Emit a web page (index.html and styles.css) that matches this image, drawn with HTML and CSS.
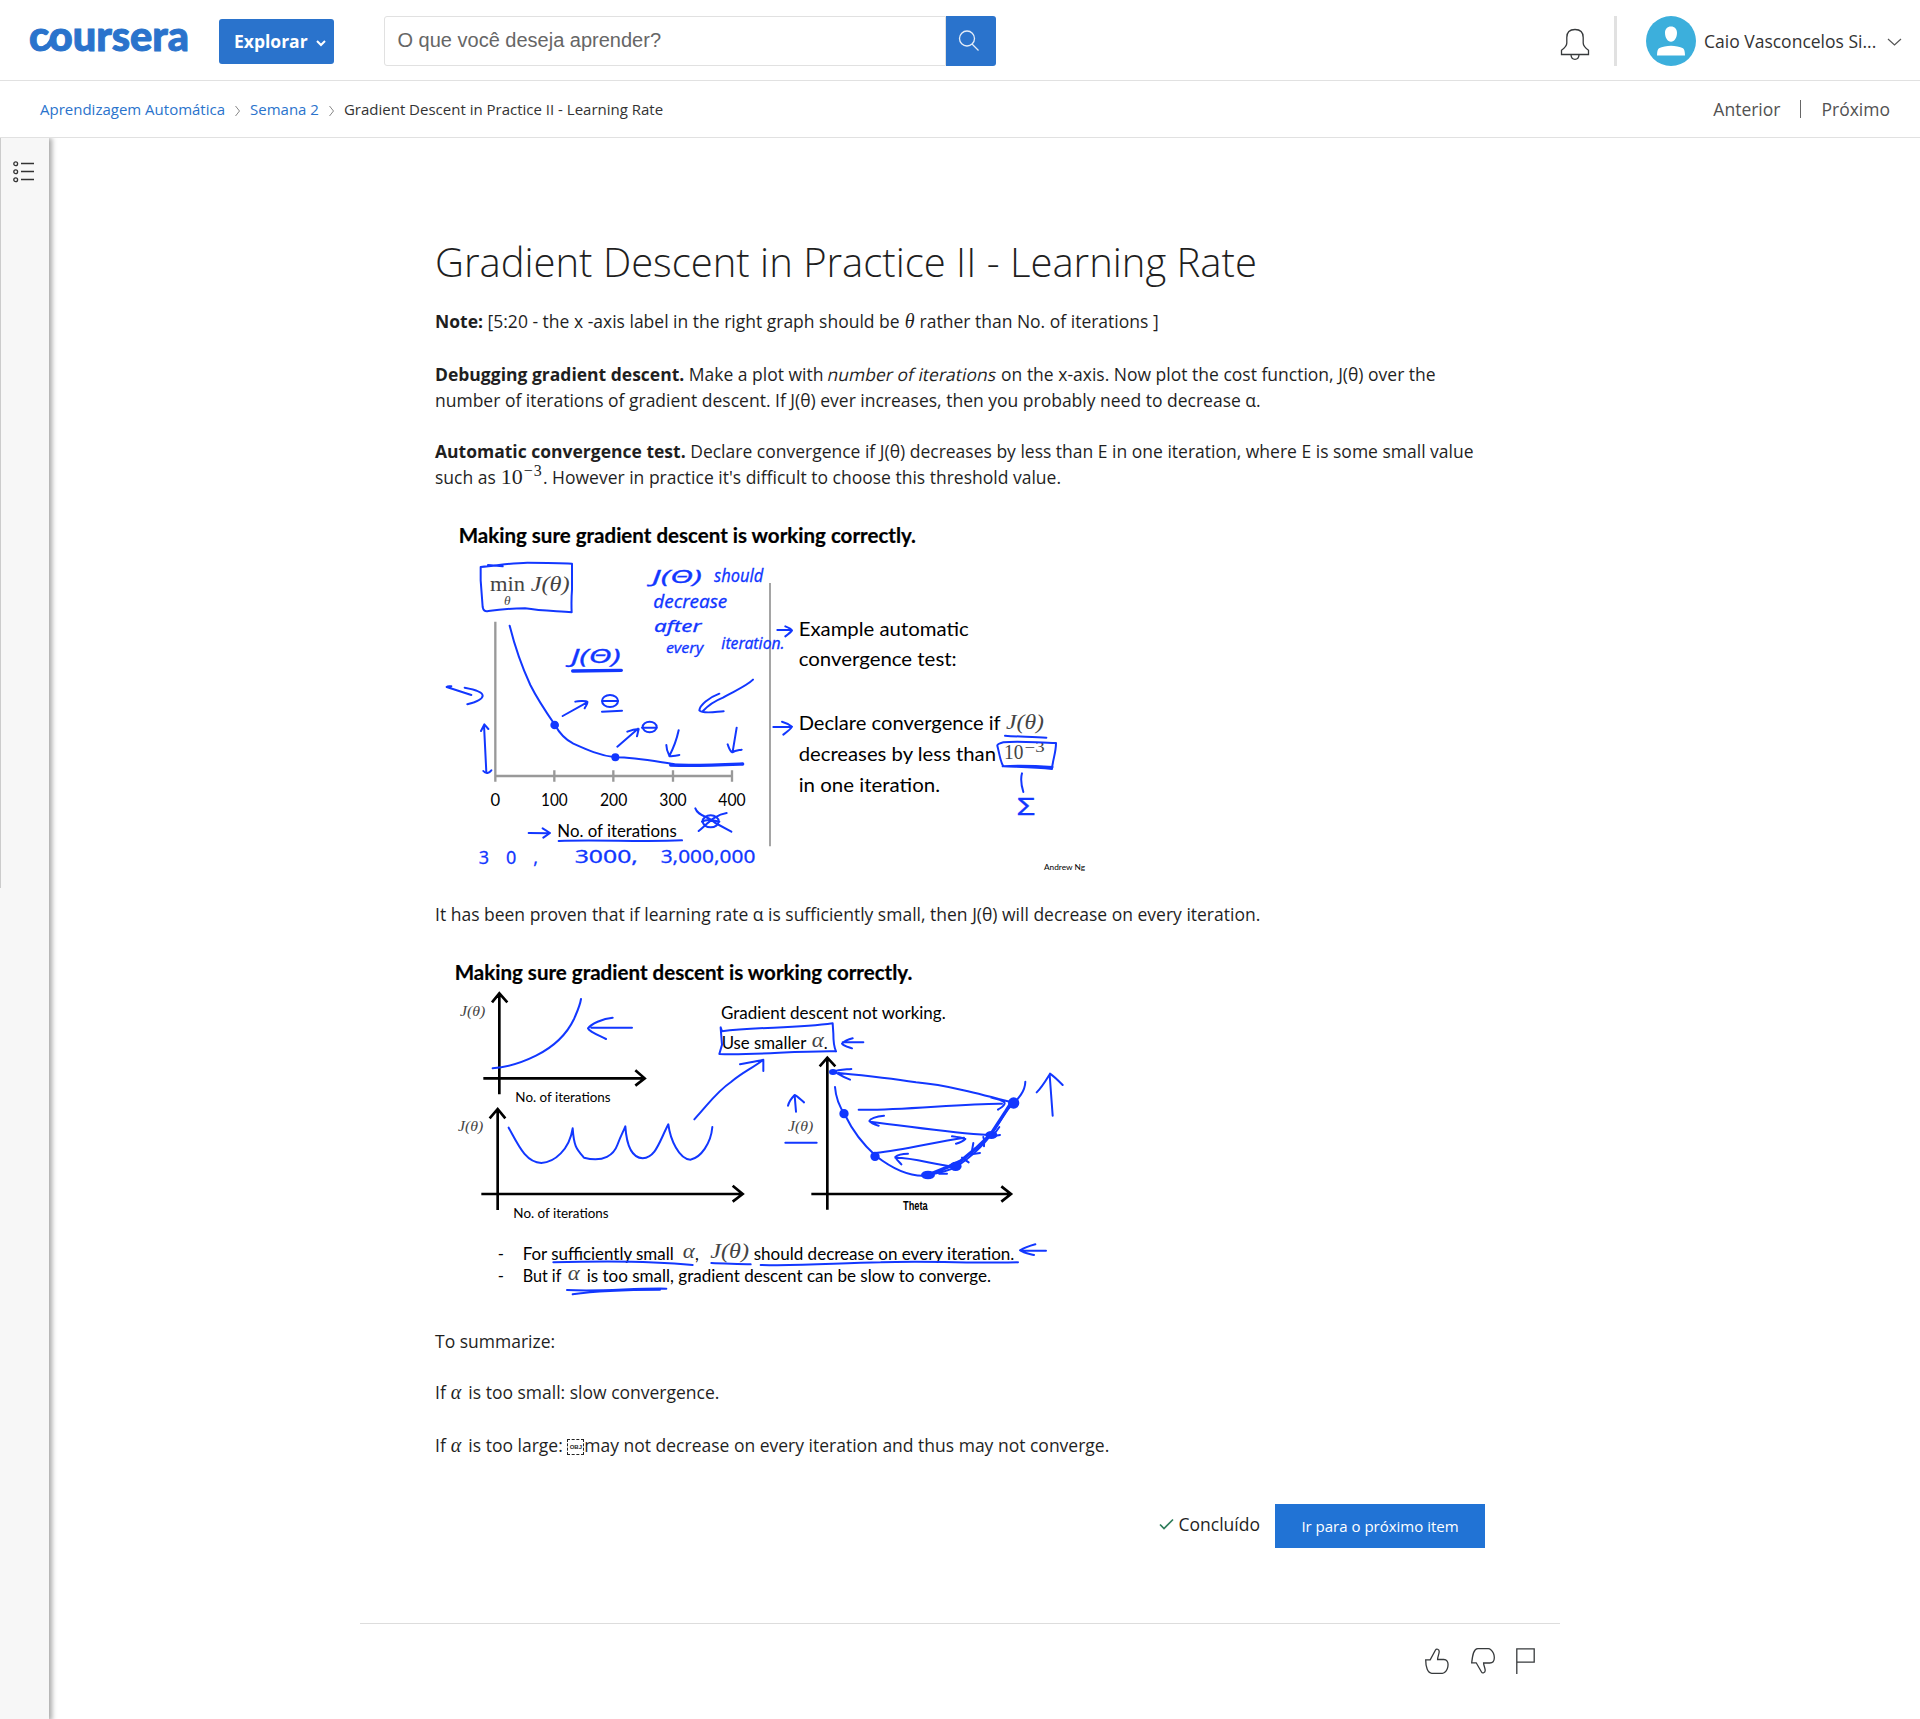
FILE: index.html
```html
<!DOCTYPE html>
<html lang="pt-BR">
<head>
<meta charset="utf-8">
<title>Gradient Descent in Practice II - Learning Rate | Coursera</title>
<link rel="stylesheet" href="styles.css">
</head>
<body>
<header class="topbar">
  <svg class="logo" width="162" height="34" viewBox="0 0 162 34" role="img" aria-label="coursera">
    <text y="27" x="0" textLength="160" lengthAdjust="spacingAndGlyphs">coursera</text>
    <path d="M15.500 24.200c4-1.500 5.500-5 7.500-8.200 1.500-2.500 2.500-5 5.500-7"/>
  </svg>
  <button class="explore">Explorar<svg width="10" height="7" viewBox="0 0 10 7"><path d="M1 1l4 4 4-4"/></svg></button>
  <div class="search">
    <div class="search-input">O que você deseja aprender?</div>
    <button class="search-btn" aria-label="Buscar"><svg width="22" height="22" viewBox="0 0 22 22"><circle cx="9" cy="8.500" r="7.500"/><path d="M14 14l6.500 6.500"/></svg></button>
  </div>
  <div class="account">
    <svg class="bell" width="30" height="32" viewBox="0 0 30 32"><path d="M1.500 26.500v-4.200c2.700-2 5.300-4.300 5.300-7.300v-5.500c0-5 3-8 8.200-8s8.200 3 8.200 8v5.500c0 3 2.600 5.300 5.300 7.300v4.200zM11 27c.2 2.700 1.700 4.300 4 4.300s3.800-1.600 4-4.300"/></svg>
    <span class="divider"></span>
    <svg class="avatar" width="50" height="50" viewBox="0 0 50 50"><circle cx="25" cy="25" r="25" fill="#3cafdc"/><path fill="#fff" d="M25 10.500c-3.700 0-6 2.500-6 6.300 0 4.700 2.600 9 6 9s6-4.300 6-9c0-3.800-2.300-6.300-6-6.300zM11 39.500c.1-4 .6-6.500 2-7.300 3-1.600 8-2.500 12-2.500s9 .9 12 2.500c1.400.8 1.900 3.300 2 7.300z"/></svg>
    <span class="name">Caio Vasconcelos Si...</span>
    <svg class="chev" width="15" height="8" viewBox="0 0 15 8"><path d="M1 1l6.500 6L14 1"/></svg>
  </div>
</header>
<nav class="crumbs">
  <a>Aprendizagem Automática</a>
  <svg width="7" height="12" viewBox="0 0 7 12"><path d="M1.500 1l4 5-4 5"/></svg>
  <a>Semana 2</a>
  <svg width="7" height="12" viewBox="0 0 7 12"><path d="M1.500 1l4 5-4 5"/></svg>
  <span>Gradient Descent in Practice II - Learning Rate</span>
  <div class="pager"><span>Anterior</span><i></i><span>Próximo</span></div>
</nav>
<div class="page">
  <aside class="rail">
    <svg width="22" height="22" viewBox="0 0 22 22"><g><circle cx="2.700" cy="2.800" r="1.900"/><circle cx="2.700" cy="10.800" r="1.900"/><circle cx="2.700" cy="18.800" r="1.900"/></g><path d="M8 2.500h13M8 10.500h13M8 18.500h13"/></svg>
  </aside>
  <main class="main">
    <article class="reading">
      <h1>Gradient Descent in Practice II - Learning Rate</h1>
      <p class="p-note"><b>Note:</b> [5:20 - the x -axis label in the right graph should be <em class="math">θ</em> rather than No. of iterations ]</p>
      <p class="p-debug"><b>Debugging gradient descent.</b> Make a plot with <em class="slant">number of iterations</em> on the x-axis. Now plot the cost function, J(θ) over the<br>number of iterations of gradient descent. If J(θ) ever increases, then you probably need to decrease α.</p>
      <p class="p-auto"><b>Automatic convergence test.</b> Declare convergence if J(θ) decreases by less than E in one iteration, where E is some small value<br>such as <span class="math num">10<sup>−3</sup></span>. However in practice it's difficult to choose this threshold value.</p>

      <svg class="slide slide-one" width="655" height="370" viewBox="15 0 1965 1110">
        <text class="h" x="86" y="97" textLength="1372" lengthAdjust="spacingAndGlyphs">Making sure gradient descent is working correctly.</text>
        <g class="gray"><path d="M196 332v480M196 795h712M373 778v34M550 778v34M729 778v34M906 778v34"/></g>
        <path class="sep" d="M1020 216v790"/>
        <g class="t axis"><text x="196" y="884">0</text><text x="373" y="884" textLength="80" lengthAdjust="spacingAndGlyphs">100</text><text x="551" y="884" textLength="82" lengthAdjust="spacingAndGlyphs">200</text><text x="729" y="884" textLength="82" lengthAdjust="spacingAndGlyphs">300</text><text x="906" y="884" textLength="82" lengthAdjust="spacingAndGlyphs">400</text></g>
        <g class="t">
          <text x="382" y="977" textLength="358" lengthAdjust="spacingAndGlyphs" font-size="49">No. of iterations</text>
          <text x="1106" y="374" textLength="510" lengthAdjust="spacingAndGlyphs">Example automatic</text>
          <text x="1106" y="465" textLength="474" lengthAdjust="spacingAndGlyphs">convergence test:</text>
          <text x="1106" y="658" textLength="606" lengthAdjust="spacingAndGlyphs">Declare convergence if</text>
          <text x="1106" y="749" textLength="592" lengthAdjust="spacingAndGlyphs">decreases by less than</text>
          <text x="1106" y="844" textLength="424" lengthAdjust="spacingAndGlyphs">in one iteration.</text>
          <text x="1842" y="1076" textLength="123" lengthAdjust="spacingAndGlyphs" font-size="25">Andrew Ng</text>
        </g>
        <g class="m"><text x="180" y="241" textLength="105" lengthAdjust="spacingAndGlyphs" class="up">min</text><text x="222" y="281" font-size="40">θ</text><text x="302" y="241" textLength="117" lengthAdjust="spacingAndGlyphs">J(θ)</text><text x="1727" y="653" textLength="154" lengthAdjust="spacingAndGlyphs" transform="translate(450 0) scale(.74 1)">J(θ)</text><text class="up" x="1722" y="745" textLength="58" lengthAdjust="spacingAndGlyphs" font-size="60">10</text><text class="up" x="1784" y="724" textLength="60" lengthAdjust="spacingAndGlyphs" font-size="42">−3</text></g>
        <g class="hand">
          <text x="666" y="215" textLength="150" lengthAdjust="spacingAndGlyphs">J(Θ)</text><text x="852" y="213" textLength="148" lengthAdjust="spacingAndGlyphs">should</text>
          <text x="670" y="292" textLength="222" lengthAdjust="spacingAndGlyphs">decrease</text><text x="672" y="362" textLength="142" lengthAdjust="spacingAndGlyphs" font-size="46">after</text>
          <text x="708" y="426" textLength="112" lengthAdjust="spacingAndGlyphs" font-size="44">every</text><text x="874" y="414" textLength="190" lengthAdjust="spacingAndGlyphs" font-size="46">iteration.</text>
          <text x="422" y="455" textLength="150" lengthAdjust="spacingAndGlyphs" font-size="60">J(Θ)</text>
          <text x="146" y="1058" textLength="178" lengthAdjust="spacing" class="up">3 0 ,</text><text x="434" y="1056" textLength="190" lengthAdjust="spacingAndGlyphs" class="up">3000,</text><text x="692" y="1055" textLength="284" lengthAdjust="spacingAndGlyphs" class="up">3,000,000</text>
          <text class="up" x="1760" y="911" font-size="68" textLength="56" lengthAdjust="spacingAndGlyphs">Σ</text>
        </g>
        <g class="ink">
          <path d="M174 162l44 4M152 168c50-4 90-12 140-13 50 0 90 0 134 3l0 78c-2 24-2 42-1 68-48-4-90-4-140-12-46 0-70 2-110 8-10 2-15-1-17-12l-6-80zM239 344c14 56 40 130 62 178 22 44 45 78 74 120 14 26 28 42 55 56 40 18 80 36 126 41 60 0 120 12 175 20"/>
          <path class="fat" d="M428 480l146-2M722 762c70 3 140 0 216-3"/>
          <path d="M398 615l72-40M436 572c12-4 34-2 36 0 2 8-6 14-8 20M516 602l60-3M562 707l62-54M592 662c14-6 30-8 34-8l-5 22M50 528l74 24M50 528c4-4 10-2 14-2M104 530c22 4 54 12 54 24 0 10-24 20-46 26M162 642l7 142M153 660l10-20 12 14M160 780c8 10 18 6 24-2M969 506c-20 20-64 38-90 54-25 10-45 24-60 40M868 548c-32 12-58 34-60 50 10 12 50 4 73 3M746 658c-6 28-18 58-28 77M709 702c0 16 6 26 10 34 8 0 18-2 29-4M920 650l-12 72M893 700c4 10 6 20 14 24 8-6 18-6 28-8M1042 357l40-1M1066 346c10 4 18 8 20 12-4 6-12 12-20 18M1030 648h54M1056 632c14 4 24 10 30 15-4 8-18 18-26 24M296 966l62 1M338 952l22 14-20 14M386 990c120-5 250 4 370-2M796 892c8 24 40 24 60 44l48 26M890 906c-34 4-58 32-84 54"/>
          <ellipse cx="540" cy="570" rx="24" ry="18"/><path d="M518 570h46M636 650h44M816 932c12-8 38-4 52 0"/><ellipse cx="659" cy="648" rx="21" ry="16"/><ellipse cx="842" cy="931" rx="24" ry="18"/>
          <path d="M1725 674c40 4 84 2 124 6M1702 704c0-4 10-8 18-10 50-6 104 2 158 2 0 30-10 50-12 78-50-6-96-6-146-8-10-16-12-40-18-62M1718 766c48-4 96-2 150 2M1776 787c-6 20-2 36 4 56"/>
          <circle class="dot" cx="374" cy="642" r="10"/><circle class="dot" cx="556" cy="739" r="9"/>
        </g>
      </svg>

      <p class="p-proven">It has been proven that if learning rate α is sufficiently small, then J(θ) will decrease on every iteration.</p>

      <svg class="slide slide-two" width="655" height="360" viewBox="15 180 1965 1080">
        <text class="h" x="74" y="268" textLength="1373" lengthAdjust="spacingAndGlyphs">Making sure gradient descent is working correctly.</text>
        <g class="black"><path d="M208 308v302M160 562h482M186 334l22-27 24 27M616 538l28 24-28 22M203 655v302M154 909h780M179 682l24-28 23 28M908 884l30 25-30 23M1192 504v452M1144 909h600M1169 526l23-26 24 26M1714 886l29 23-29 23"/></g>
        <g class="t">
          <text x="256" y="633" textLength="286" lengthAdjust="spacingAndGlyphs" font-size="40">No. of iterations</text><text x="250" y="981" textLength="286" lengthAdjust="spacingAndGlyphs" font-size="40">No. of iterations</text>
          <text x="873" y="385" textLength="674" lengthAdjust="spacingAndGlyphs" font-size="50">Gradient descent not working.</text><text x="875" y="474" textLength="254" lengthAdjust="spacingAndGlyphs" font-size="50">Use smaller</text><text x="1181" y="474" font-size="50">.</text>
          <text x="203" y="1108" font-size="50">-</text><text x="278" y="1108" textLength="453" lengthAdjust="spacingAndGlyphs" font-size="50">For sufficiently small</text><text x="795" y="1108" font-size="50">,</text><text x="971" y="1108" textLength="782" lengthAdjust="spacingAndGlyphs" font-size="50">should decrease on every iteration.</text>
          <text x="203" y="1172" font-size="50">-</text><text x="278" y="1172" textLength="116" lengthAdjust="spacingAndGlyphs" font-size="50">But if</text><text x="470" y="1172" textLength="1213" lengthAdjust="spacingAndGlyphs" font-size="50">is too small, gradient descent can be slow to converge.</text>
          <text class="theta" x="1419" y="958" textLength="74" lengthAdjust="spacingAndGlyphs">Theta</text>
        </g>
        <g class="m"><text x="90" y="374" textLength="76" lengthAdjust="spacingAndGlyphs" font-size="42">J(θ)</text><text x="84" y="721" textLength="76" lengthAdjust="spacingAndGlyphs" font-size="42">J(θ)</text><text x="1074" y="721" textLength="76" lengthAdjust="spacingAndGlyphs" font-size="42">J(θ)</text><text x="841" y="1101" textLength="116" lengthAdjust="spacingAndGlyphs">J(θ)</text><text x="758" y="1102" textLength="36" lengthAdjust="spacingAndGlyphs" font-size="60">α</text><text x="413" y="1168" textLength="36" lengthAdjust="spacingAndGlyphs" font-size="60">α</text><text x="1145" y="468" textLength="36" lengthAdjust="spacingAndGlyphs" font-size="60">α</text></g>
        <g class="ink">
          <path d="M188 532c50-4 90-18 130-38 60-30 96-72 114-110 12-28 18-40 21-60M606 410H484M548 380c-30 2-66 20-74 32 4 10 30 20 54 32M236 710c28 50 50 104 98 106 40-2 84-40 94-104 4 56 12 62 34 88 60 16 90-10 100-38 14-36 16-36 24-56 4 60 22 94 52 96 40-4 48-46 77-102 6 46 32 104 66 106 32-6 62-50 66-98M793 685c46-50 66-82 110-112 36-30 62-40 96-66M930 520c30-6 46-8 70-14v34"/>
          <path d="M872 409l4 12c98-14 220-8 332-24l2 30c0 24 0 38 8 54M872 411l4 50-8 28c110 4 230-10 350-8M1300 454l-62 0M1268 442c-16 4-26 10-32 16 6 8 18 10 30 14M1098 662l-4-48M1074 644c4-16 12-24 20-32 10 4 20 16 28 22M1066 755h94"/>
          <path d="M1215 588c2 28 14 60 30 84 26 54 56 90 92 122 46 36 90 60 142 60 50-8 80-14 108-32 70-50 100-90 140-160 22-26 58-50 59-90M1226 546c84 8 146 14 232 28 90 8 190 34 296 62M1264 534c-24 2-42 2-52 8 10 4 24 16 48 24M1286 656c100 4 330-20 430-18M1680 618c20 8 38 8 44 18 0 10-12 14-20 20M1676 732c-120-6-220-24-356-40M1362 674c-26 2-42 10-44 16 4 6 14 10 28 14M1336 786c90-10 172-32 266-46M1566 736c16 2 30 4 40 8-6 6-14 10-28 14M1570 826c-60-4-110-26-174-26M1434 788c-20 0-34 6-38 10 4 10 12 14 18 22M1868 674l-9-122M1820 604c18-18 30-40 40-56 12 8 26 22 38 34"/>
          <path class="trail" d="M1494 852l64-26 34-16 46-38 44-42 46-70 20-32"/>
          <path d="M1660 738c4 10 2 18 2 28M1630 756l-6 34 26-4M1596 800l20 14M1708 708l-20 28 22-4M1543 832l-16 16 24 0"/>
          <circle class="dot" cx="1242" cy="668" r="11"/><circle class="dot" cx="1335" cy="796" r="11"/><ellipse class="dot" cx="1494" cy="852" rx="18" ry="10"/><ellipse class="dot" cx="1577" cy="826" rx="15" ry="11"/><ellipse class="dot" cx="1684" cy="732" rx="15" ry="9"/><circle class="dot" cx="1751" cy="636" r="14"/><ellipse class="dot" cx="1209" cy="543" rx="9" ry="6"/>
          <path d="M370 1114c130-4 280-6 418 8M844 1116c40 2 80 2 118 4M992 1122c120 4 230-6 360-8 140-6 280 4 412 0M1848 1079h-76M1816 1060c-22 6-36 12-46 18 10 8 26 10 42 14M411 1197c100 6 200-6 298-4M428 1210c80-12 180-14 262-14"/>
        </g>
      </svg>

      <p class="p-sum">To summarize:</p>
      <p class="p-small">If <em class="math alpha">α</em> is too small: slow convergence.</p>
      <p class="p-large">If <em class="math alpha">α</em> is too large: <span class="obj">OBJ</span>may not decrease on every iteration and thus may not converge.</p>
      <div class="actions">
        <svg width="15" height="12" viewBox="0 0 15 12"><path d="M1 6.500L5 10.500 14 1.500"/></svg>
        <span>Concluído</span>
        <button>Ir para o próximo item</button>
      </div>
    </article>
    <footer class="feedback">
      <svg width="24" height="26" viewBox="0 0 24 26"><path d="M.7 11.800h4.500L10.500 2c1-1.800 3.700-.7 3.700 1.500 0 2.500-1.600 5-1.600 8h6.200c6.200 0 4.800 9.500 1 12.800-.8.700-1.500 1-2.500 1H6.800C2.500 25.300.7 18.500.7 11.800z"/></svg>
      <svg width="24" height="26" viewBox="0 0 24 26"><path d="M.7 14.800h4.500L10.500 24c1 1.800 3.700.7 3.700-1.500 0-2.500-1.600-5-1.600-7.500h6.200c6.200 0 5.500-9.500 1-13.300-.8-.7-1.500-1-2.500-1H6.800C2.500.7 1.500 7.500.7 14.800z"/></svg>
      <svg width="19" height="26" viewBox="0 0 19 26"><path d="M.8 26V.8h17.400v13.400H.8"/></svg>
    </footer>
  </main>
</div>
</body>
</html>
```
FILE: styles.css
```css
* { box-sizing: border-box; }
body { margin: 0; background: #fff; color: #1f1f1f; font: 17.5px/26.25px "Open Sans", sans-serif; }
svg { display: block; flex: none; fill: none; }
button { border: 0; margin: 0; font-family: inherit; color: #fff; }
p, h1 { margin: 0; white-space: nowrap; }

.topbar { display: flex; align-items: flex-start; height: 81px; padding-left: 29px; border-bottom: 1px solid #e1e1e1; }
.logo { margin-top: 24px; overflow: visible; }
.logo text { font: 900 42px Lato, sans-serif; fill: #2a73cc; stroke: #2a73cc; stroke-width: 1; }
.logo path { stroke: #2a73cc; stroke-width: 5; }
.explore { display: flex; align-items: center; gap: 8px; width: 115px; height: 45px; margin: 19px 0 0 28px; padding: 0 0 1px 15px; background: #2a73cc; border-radius: 3px; font-size: 17.5px; font-weight: 700; }
.explore svg { margin-top: 4px; stroke: #fff; stroke-width: 2; }
.search { display: flex; width: 612px; height: 50px; margin: 16px 0 0 50px; }
.search-input { flex: 1; padding: 10px 12.5px; border: 1px solid #e1e1e1; border-radius: 3px 0 0 3px; color: #666; font: 20px/26px "Liberation Sans", sans-serif; }
.search-btn { width: 50px; padding: 0 0 0 12px; background: #2a73cc; border-radius: 0 3px 3px 0; }
.search-btn svg { stroke: #e4edf8; stroke-width: 1.3; }
.account { display: flex; align-items: center; height: 50px; margin: 16px 18px 0 auto; }
.bell { margin-top: 5px; stroke: #373a3c; stroke-width: 1.3; }
.divider { width: 3px; height: 50px; margin: 0 29px 0 24px; background: #e1e1e1; }
.name { width: 175px; margin-left: 8px; white-space: nowrap; color: #333; }
.chev { margin: 2px 0 0 8px; stroke: #555; stroke-width: 1.2; }

.crumbs { display: flex; align-items: center; height: 57px; padding: 0 30px 0 40px; border-bottom: 1px solid #e1e1e1; font-size: 15px; white-space: nowrap; color: #333; }
.crumbs a { color: #2a73cc; }
.crumbs > svg { margin: 3px 9px 0 9px; stroke: #888; }
.pager { display: flex; align-items: center; margin-left: auto; font-size: 17.5px; color: #525252; }
.pager i { width: 1px; height: 18px; margin: 0 20px; background: #666; }

.page { display: flex; height: 1581px; }
.rail { flex: none; width: 49px; padding: 23px 0 0 13px; background: linear-gradient(#ccc, #ccc) 0 0 / 1px 750px no-repeat #f7f7f7; box-shadow: 2px 1px 5px 1px rgba(0, 0, 0, .34); clip-path: inset(0 -10px 0 0); }
.rail svg { stroke: #333; stroke-width: 1.4; }
.rail g { stroke-width: 1.3; }
.main { flex: 1; padding-left: 311px; }
.reading { width: 1050px; margin-left: 75px; padding-top: 93.5px; }
h1 { font-size: 40px; font-weight: 300; line-height: 60px; }
.p-note { margin-top: 16.5px; }
.p-debug { margin-top: 26.75px; }
.p-auto { margin-top: 24.5px; }
.p-proven { margin-top: 20px; }
.p-sum { margin-top: 17px; }
.p-small { margin-top: 25px; }
.p-large { margin-top: 26.5px; }
.slant { display: inline-block; font-style: normal; transform: skewX(-12deg); }
.math { padding: 0 .5px; font-family: "Liberation Serif", serif; font-size: 20px; line-height: 1px; }
.math.num { font-size: 22px; }
.math.alpha { padding-right: 2.500px; }
.math sup { margin-left: 1px; font-size: 16px; line-height: 1px; letter-spacing: .8px; }
.obj { display: inline-block; overflow: hidden; width: 17px; height: 16px; border: 1px dashed #222; font: 700 6px/14px "Liberation Sans", sans-serif; text-align: center; vertical-align: -3px; }
.slide-one { margin-top: 20px; }
.slide-two { margin-top: 24px; }

.slide .h { font: 700 60px Lato, sans-serif; fill: #000; stroke: #000; stroke-width: .6; }
.slide .t { font-family: Lato, sans-serif; font-size: 57px; fill: #000; }
.slide .axis { font-size: 50px; text-anchor: middle; }
.slide .theta { font: 700 37px "Liberation Sans", sans-serif; }
.slide .m { font-family: "Liberation Serif", serif; font-size: 64px; font-style: italic; fill: #444; }
.slide .hand { font-family: "Noto Sans", sans-serif; font-style: italic; font-size: 54px; fill: #1237ff; stroke: #1237ff; stroke-width: .8; }
.slide .up { font-style: normal; }
.gray { stroke: #999; stroke-width: 7; }
.sep { stroke: #777; stroke-width: 4; }
.black { stroke: #000; stroke-width: 8; }
.ink { stroke: #1237ff; stroke-width: 6; stroke-linecap: round; stroke-linejoin: round; }
.ink .fat { stroke-width: 10; }
.ink .trail { stroke-width: 10; }
.ink .dot { fill: #1237ff; }

.actions { display: flex; align-items: flex-start; justify-content: flex-end; margin-top: 46px; }
.actions svg { margin: 14px 5px 0 0; stroke: #2e7d5b; stroke-width: 1.7; }
.actions span { margin: 7px 15px 0 0; }
.actions button { width: 210px; height: 44px; background: #2173d5; font-size: 15px; }
.feedback { display: flex; justify-content: flex-end; gap: 21.5px; width: 1200px; margin-top: 75px; padding: 24px 25px 0 0; border-top: 1px solid #ddd; }
.feedback svg { stroke: #373a3c; stroke-width: 1.3; }
```
